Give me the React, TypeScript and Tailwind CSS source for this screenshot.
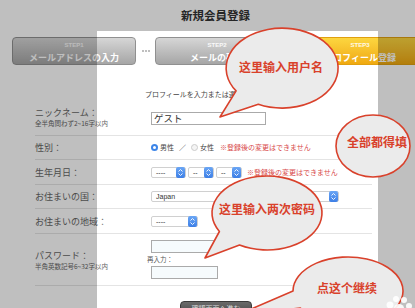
import React from "react";

function Stepper() {
  return (
    <div className="w-[9px] h-[11px] rounded-[2px] bg-gradient-to-b from-[#6aa6f5] to-[#3d7fe6] flex flex-col items-center justify-center gap-[1px]">
      <svg width="5" height="3" viewBox="0 0 5 3"><path d="M0.5 2.5 L2.5 0.5 L4.5 2.5" stroke="#fff" strokeWidth="0.9" fill="none" /></svg>
      <svg width="5" height="3" viewBox="0 0 5 3"><path d="M0.5 0.5 L2.5 2.5 L4.5 0.5" stroke="#fff" strokeWidth="0.9" fill="none" /></svg>
    </div>
  );
}

function Select({ className, value }: { className: string; value: string }) {
  return (
    <div className={`h-[11px] flex items-center justify-between border border-[#d0d0d0] rounded-[2px] bg-white pl-[4px] ${className}`}>
      <span className="text-[7px] leading-[9px] text-[#333] font-['Liberation_Sans',sans-serif]">{value}</span>
      <Stepper />
    </div>
  );
}

function Step({ n, label, active }: { n: number; label: string; active?: boolean }) {
  return (
    <div
      className={`w-[124px] h-[28px] shrink-0 rounded-[4px] border flex flex-col items-center pt-[3px] gap-[3px] ${
        active
          ? "bg-gradient-to-b from-[#fcd63f] to-[#f0a90e] border-[#e0a010]"
          : "bg-gradient-to-b from-[#d6d6d6] to-[#a6a6a6] border-[#909090]"
      }`}
    >
      <span className="text-[6px] leading-[8px] text-white/90 font-bold font-['Liberation_Sans',sans-serif]">STEP{n}</span>
      <span className="text-[9px] leading-[11px] text-white font-bold whitespace-nowrap">{label}</span>
    </div>
  );
}

function Dots() {
  return (
    <div className="w-[19px] shrink-0 flex items-center justify-center gap-[1px]">
      <span className="w-[2px] h-[2px] rounded-full bg-[#aaa]" />
      <span className="w-[2px] h-[2px] rounded-full bg-[#aaa]" />
      <span className="w-[2px] h-[2px] rounded-full bg-[#aaa]" />
    </div>
  );
}

function Radio({ on }: { on?: boolean }) {
  return on ? (
    <span className="w-[7px] h-[7px] rounded-full bg-[#3d85e8] flex items-center justify-center">
      <span className="w-[3px] h-[3px] rounded-full bg-white" />
    </span>
  ) : (
    <span className="w-[7px] h-[7px] rounded-full border border-[#ccc] bg-[#f4f4f4]" />
  );
}

export default function App() {
  const row = "ml-[35px] w-[337px] flex items-center border-b border-[#e4e4e4]";
  const label = "w-[116px] shrink-0 text-[9px] leading-[13px] text-[#666]";
  const note = "text-[7px] leading-[9px] text-[#d84a4a] whitespace-nowrap";

  return (
    <div className="relative w-[415px] h-[308px] overflow-hidden bg-white font-['Noto_Sans_CJK_JP',sans-serif]">
      {/* page title */}
      <div className="h-[31px] flex items-center pl-[181px]">
        <h1 className="text-[11.5px] font-bold text-[#333]">新規会員登録</h1>
      </div>

      {/* steps */}
      <div className="mt-[6px] flex items-center pl-[12px]">
        <Step n={1} label="メールアドレスの入力" />
        <Dots />
        <Step n={2} label="メールの確認" />
        <Dots />
        <Step n={3} label="プロフィール登録" active />
      </div>

      <p className="mt-[24px] h-[10px] pl-[145px] text-[7px] leading-[10px] text-[#444] whitespace-nowrap">
        プロフィールを入力または選択してください
      </p>

      {/* nickname */}
      <div className={`${row} h-[37px]`}>
        <div className={label}>
          <div>ニックネーム：</div>
          <div className="text-[6.5px] leading-[9px]">全半角問わず2~16字以内</div>
        </div>
        <div className="w-[115px] h-[13px] mt-[2px] border border-[#aaa] bg-white flex items-center pl-[2px] text-[9.5px] text-[#333]">
          ゲスト
        </div>
      </div>

      {/* gender */}
      <div className={`${row} h-[24px]`}>
        <div className={label}>性別：</div>
        <div className="flex items-center gap-[2px] text-[7px] leading-[9px] text-[#444]">
          <Radio on />
          <span>男性</span>
          <span className="mx-[3px]">／</span>
          <Radio />
          <span>女性</span>
          <span className={`${note} ml-[4px]`}>※登録後の変更はできません</span>
        </div>
      </div>

      {/* birthday */}
      <div className={`${row} h-[25px]`}>
        <div className={label}>生年月日：</div>
        <div className="flex items-center gap-[2px]">
          <Select className="w-[35px]" value="----" />
          <Select className="w-[26px]" value="--" />
          <Select className="w-[26px]" value="--" />
          <span className={`${note} ml-[3px]`}>※登録後の変更はできません</span>
        </div>
      </div>

      {/* country */}
      <div className={`${row} h-[24px]`}>
        <div className={label}>お住まいの国：</div>
        <Select className="w-[188px]" value="Japan" />
      </div>

      {/* region */}
      <div className={`${row} h-[25px]`}>
        <div className={label}>お住まいの地域：</div>
        <Select className="w-[47px]" value="----" />
      </div>

      {/* password */}
      <div className={`${row} h-[52px] items-start`}>
        <div className={`${label} mt-[15px]`}>
          <div>パスワード：</div>
          <div className="text-[6.5px] leading-[9px]">半角英数記号6~32字以内</div>
        </div>
        <div className="flex flex-col pt-[6px]">
          <div className="w-[67px] h-[13px] border border-[#aaa] bg-[#f6fbfd]" />
          <span className="-ml-1 mt-[2px] text-[6.5px] leading-[9px] text-[#555]">再入力：</span>
          <div className="w-[67px] h-[13px] mt-[2px] border border-[#aaa] bg-[#f6fbfd]" />
        </div>
      </div>

      <div className="mt-[15px] ml-[180px] w-[72px] h-[14px] rounded-t-[4px] bg-gradient-to-b from-[#6a6a6a] to-[#4a4a4a] border border-[#3a3a3a] flex justify-center pt-[2px]">
        <span className="text-[7px] leading-[9px] text-[#ddd]">確認画面へ進む</span>
      </div>

      {/* dim overlays */}
      <div className="absolute left-0 top-0 w-[97px] h-full bg-black/25" />
      <div className="absolute left-[97px] top-0 w-[281px] h-[31px] bg-black/25" />
      <div className="absolute left-[378px] top-0 w-[37px] h-full bg-black/25" />

      {/* callout bubbles */}
      <svg className="absolute left-0 top-0 pointer-events-none" width="415" height="308" viewBox="0 0 415 308">
        <g fill="#ebebeb" stroke="#d9412b" strokeWidth="1.6" strokeLinejoin="round">
          <path d="M236.1 90.9 A56 40 0 1 1 258.3 104.3 L220 117 Z" />
          <ellipse cx="373" cy="146" rx="37" ry="31" />
          <path d="M219.4 231.5 A55 37 0 1 1 239.5 245 L205 258 Z" />
          <path d="M293 291 A55 34 0 1 1 300.4 308 L235 316 Z" />
        </g>
        <g fill="#d9412b" fontSize="12" fontWeight="700" textAnchor="middle" fontFamily="'Noto Sans CJK SC', sans-serif">
          <text x="281" y="72">这里输入用户名</text>
          <text x="377" y="147">全部都得填</text>
          <text x="267" y="214">这里输入两次密码</text>
          <text x="347" y="293">点这个继续</text>
        </g>
        <g fill="#ffffff" opacity="0.9">
          <circle cx="390" cy="305" r="3.5" />
          <circle cx="396" cy="299" r="3" />
          <circle cx="404" cy="300" r="3" />
          <circle cx="409" cy="306" r="3" />
          <ellipse cx="399" cy="308" rx="5" ry="4" />
        </g>
      </svg>
    </div>
  );
}
